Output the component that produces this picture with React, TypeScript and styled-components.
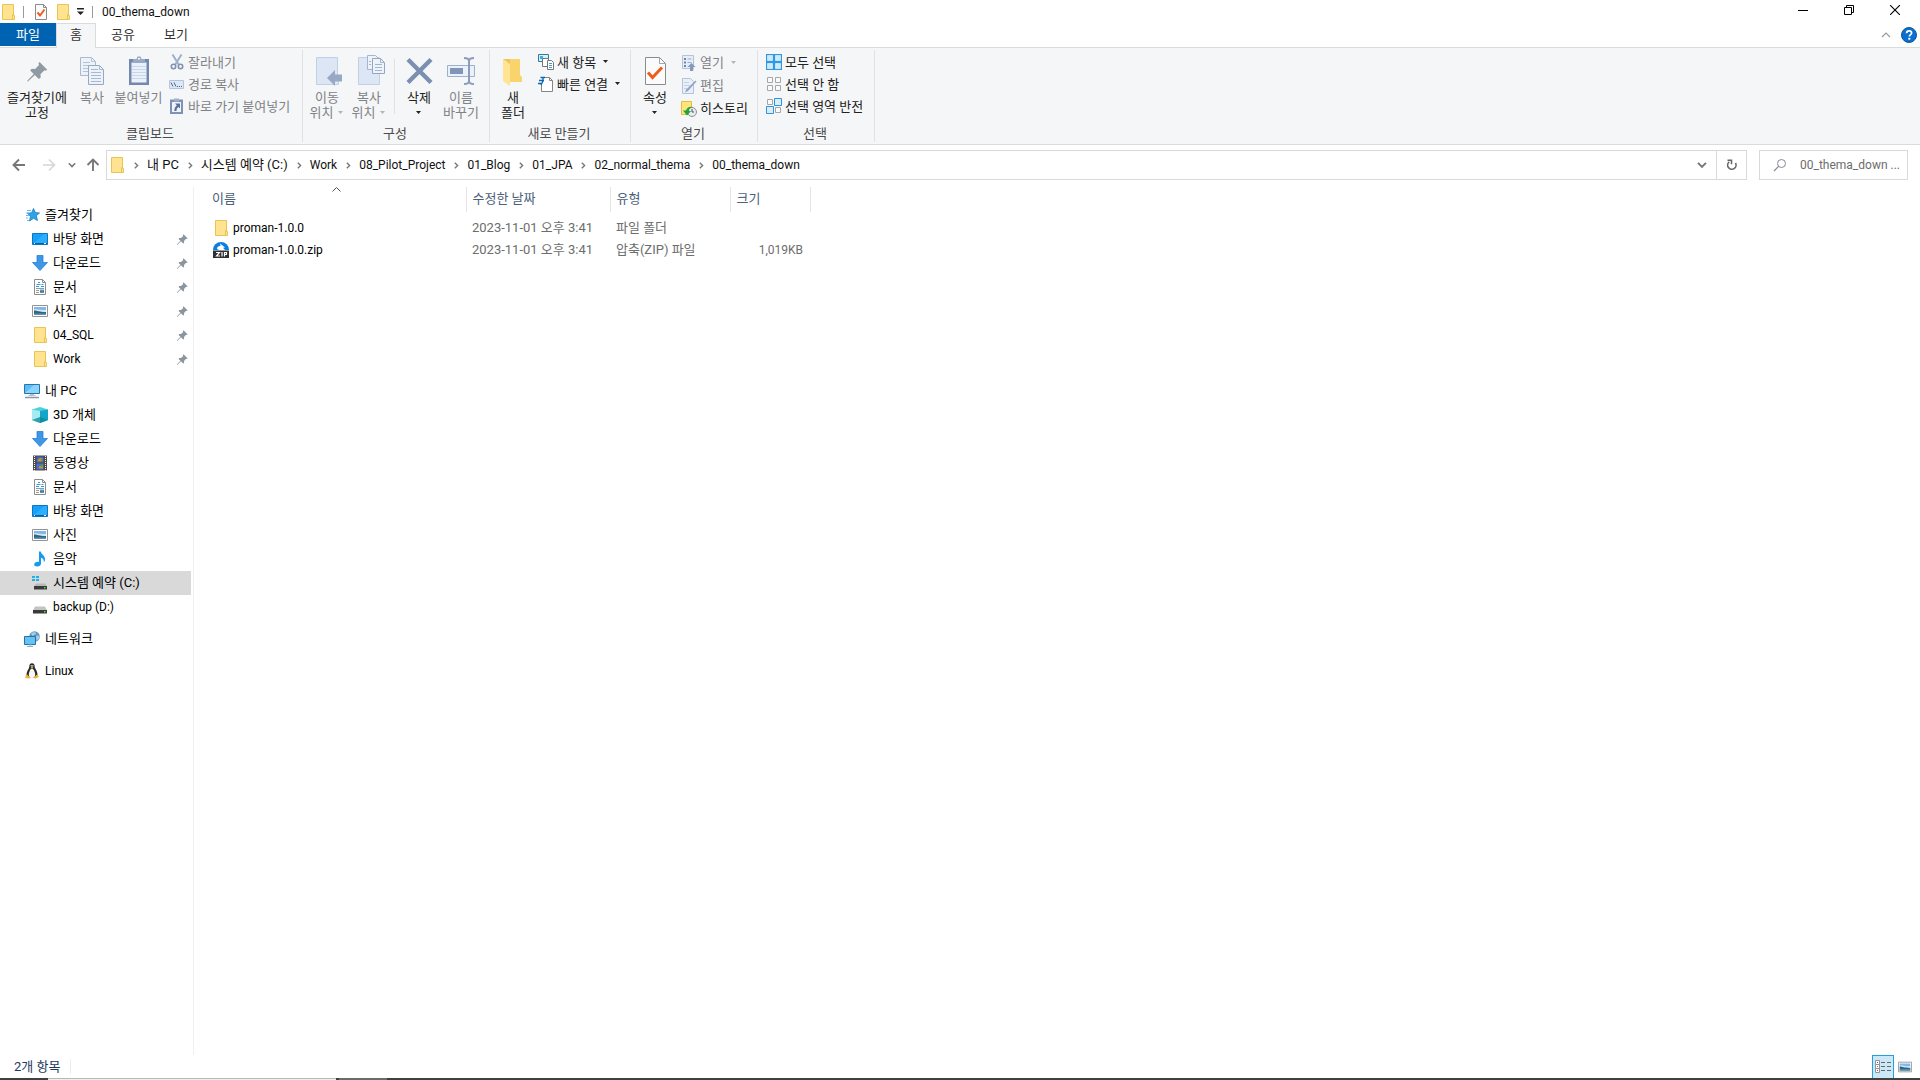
import React from "react";
import styled, { createGlobalStyle, css } from "styled-components";

const GlobalStyle = createGlobalStyle`
  *, *::before, *::after { box-sizing: border-box; }
  html, body { margin: 0; padding: 0; background: #fff; }
  body, button, input, table {
    font-family: Roboto, "Noto Sans CJK KR", sans-serif;
    font-size: 13px;
    line-height: 15px;
    color: #111;
  }
  button { margin: 0; padding: 0; border: 0; background: none; cursor: default; }
  svg { display: block; flex: none; }
  a { color: inherit; text-decoration: none; cursor: default; }
  ul, ol { margin: 0; padding: 0; list-style: none; }
`;

const LINE = "#dadbdc";

/* ---------- text ---------- */

const TextSpan = styled.span<{ $latin: boolean }>`
  display: block;
  white-space: nowrap;
  font-size: ${(p) => (p.$latin ? "12px" : "13px")};
  padding-bottom: ${(p) => (p.$latin ? "0" : "2px")};
`;

const Text = ({ children }: { children: string }) => (
  <TextSpan $latin={!/[\uac00-\ud7a3]/.test(children)}>{children}</TextSpan>
);

/* ---------- icons ---------- */

type SvgProps = { w?: number; h?: number; box?: string; children: React.ReactNode };
const Svg = ({ w = 16, h = 16, box, children }: SvgProps) => (
  <svg width={w} height={h} viewBox={box ?? `0 0 ${w} ${h}`} fill="none" aria-hidden="true">
    {children}
  </svg>
);

const FolderIcon = () => (
  <Svg>
    <path d="M2.500.5h11v11h1v4h-12z" fill="#ffe391" stroke="#e8c454" />
    <path d="M12.500 15.500v-5h1" stroke="#e8c454" />
  </Svg>
);

const CheckedDocIcon = () => (
  <Svg>
    <path d="M2.500.5h8l3 3v12h-11z" fill="#fbfbfb" stroke="#8b8b8b" />
    <path d="M10.500.5v3h3" stroke="#8b8b8b" />
    <path d="M4.500 8.500l2.500 3 4.500-6" stroke="#ee5b22" strokeWidth="2" />
  </Svg>
);

const Caret = ({ color = "#222" }: { color?: string }) => (
  <Svg w={6} h={4}>
    <path d="M0 0h5L2.500 3z" fill={color} />
  </Svg>
);

const OverflowIcon = () => (
  <Svg w={8} h={8}>
    <path d="M0 0h7v1.500H0zM0 3.500h7L3.500 7z" fill="#222" />
  </Svg>
);

const MinimizeIcon = () => (
  <Svg w={10} h={10}>
    <path d="M0 5.500h10" stroke="#000" />
  </Svg>
);
const RestoreIcon = () => (
  <Svg w={10} h={10}>
    <path d="M.5 2.500h7v7h-7zM2.500 2.500v-2h7v7h-2" stroke="#000" />
  </Svg>
);
const CloseIcon = () => (
  <Svg w={10} h={10}>
    <path d="M0 0l10 10M10 0L0 10" stroke="#000" strokeWidth="1.100" />
  </Svg>
);
const HelpIcon = () => (
  <Svg>
    <circle cx="8" cy="8" r="7.500" fill="#0a6fce" stroke="#0c57a0" />
    <path d="M5.600 6.200c0-1.500 1-2.400 2.500-2.400s2.500.8 2.500 2.100c0 1.700-2.200 1.700-2.200 3.600" stroke="#fff" strokeWidth="1.700" />
    <path d="M7.300 10.800h2v1.900h-2z" fill="#fff" />
  </Svg>
);
const CollapseIcon = () => (
  <Svg w={10} h={6}>
    <path d="M1 5l4-4 4 4" stroke="#9a9a9a" strokeWidth="1.200" />
  </Svg>
);

const pinPath = "M9.500.5l6 6-1.200.9-1-.4-3.100 3.100.2 2.500-1.500 1.200L5.800 10.700.6 15.600l-.8.200.3-.9 4.900-5.100L2.200 7.100l1.100-1.400 2.700.2 3.100-3.100-.5-1.200z";
const PinLargeIcon = () => (
  <Svg w={32} h={32} box="-5 -5 25 25">
    <path d={pinPath} fill="#8f9aa3" />
  </Svg>
);
const PinIcon = () => (
  <Svg w={11} h={11} box="0 0 16 16">
    <path d={pinPath} fill="#8a959e" />
  </Svg>
);

const CopyLargeIcon = () => (
  <Svg w={32} h={32}>
    <path d="M4.500 2.500h11l4 4v14h-15z" fill="#edf2f9" stroke="#a9b9d2" />
    <path d="M15.500 2.500v4h4M7 7.500h7M7 10.500h10M7 13.500h10M7 16.500h10" stroke="#b4c3da" />
    <path d="M12.500 10.500h11l4 4v15h-15z" fill="#edf2f9" stroke="#96a8c6" />
    <path d="M23.500 10.500v4h4M15 14.500h7M15 17.500h10M15 20.500h10M15 23.500h10M15 26.500h10" stroke="#a7b8d3" />
  </Svg>
);
const PasteLargeIcon = () => (
  <Svg w={32} h={32}>
    <path d="M6 4h20v26H6z" fill="#7488ad" />
    <path d="M8.500 7.500h15v20h-15z" fill="#eaf1fa" />
    <path d="M9 11.500h14M9 14.500h14M9 17.500h14M9 20.500h14M9 23.500h14" stroke="#c9d7ea" />
    <path d="M10 4h3.500l1-2.500h3l1 2.500H22v4H10z" fill="#9aaac6" />
    <path d="M15 3h2v1.500h-2z" fill="#f5f6f7" />
  </Svg>
);
const CutIcon = () => (
  <Svg>
    <path d="M3.500.5l6.200 10M12.500.5l-6.200 10" stroke="#9fb0c9" strokeWidth="2" />
    <circle cx="4.500" cy="12.500" r="2.200" stroke="#7f92b2" strokeWidth="1.600" />
    <circle cx="11.500" cy="12.500" r="2.200" stroke="#7f92b2" strokeWidth="1.600" />
  </Svg>
);
const PathIcon = () => (
  <Svg>
    <path d="M.5 4.500h14v8H.5z" fill="#dce8f6" stroke="#b3c4dc" />
    <path d="M2 6.500l2 4M5 6.500l2 4M8 10.500h1M10 10.500h1M12 10.500h1" stroke="#50658c" />
  </Svg>
);
const PasteShortcutIcon = () => (
  <Svg>
    <path d="M1 1.500h13V16H1z" fill="#7f92b3" />
    <path d="M3 4h9v10H3z" fill="#eef4fb" />
    <path d="M5 .5h5v3H5z" fill="#a2b1ca" />
    <path d="M6 5.500h5v5L9.400 8.900C8 10 7.500 11 7.500 13H5.300c0-2.600.9-4.200 2.500-5.700z" fill="#5b719b" />
  </Svg>
);

const MoveToIcon = () => (
  <Svg w={32} h={32}>
    <path d="M5.500 2.500h21v20h1v7h-22z" fill="#dce6f4" stroke="#c2d0e4" />
    <path d="M31 19.500h-7v-4.500l-8 8 8 8v-4.500h7z" fill="#98a9c5" />
  </Svg>
);
const CopyToIcon = () => (
  <Svg w={32} h={32}>
    <path d="M5.500 2.500h21v27h-21z" fill="#dce6f4" stroke="#c2d0e4" />
    <path d="M14.500.5h8l3 3v11h-11z" fill="#eef3fa" stroke="#a5b5cf" />
    <path d="M19.500 3.500h8l4 4v11h-12z" fill="#eef3fa" stroke="#94a6c4" />
    <path d="M27.500 3.500v4h4M22 9.500h7M22 12.500h7M22 15.500h7M16 6.500h2M16 9.500h2" stroke="#a3b4cf" />
  </Svg>
);
const DeleteIcon = () => (
  <Svg w={32} h={32}>
    <path d="M5 4.500l23 23M28 4.500l-23 23" stroke="#7b8fb1" strokeWidth="4.400" />
  </Svg>
);
const RenameIcon = () => (
  <Svg w={32} h={32}>
    <path d="M2.500 10.500h27v11h-27z" fill="#eaf1fa" stroke="#9eb0cc" />
    <path d="M5 13h13v6H5z" fill="#8395b7" />
    <path d="M19 3c3 0 5 .5 5 3v20c0 2.500-2 3-5 3M29 3c-3 0-5 .5-5 3v20c0 2.500 2 3 5 3" stroke="#8b9dbb" strokeWidth="2" />
  </Svg>
);
const NewFolderIcon = () => (
  <Svg w={32} h={32}>
    <path d="M11 4h12v16l2 2v5H11z" fill="#f9d36c" />
    <path d="M6 4l7 5v22l-7-5z" fill="#ffe494" />
    <path d="M6 4h7v5z" fill="#eec45c" />
  </Svg>
);
const NewItemIcon = () => (
  <Svg>
    <path d="M.5.500h10v7H.5z" fill="#d5effb" stroke="#35789b" />
    <path d="M2 2h3v3H2z" fill="#3ab0df" />
    <path d="M4.500 4.500h6v8h-6z" fill="#fff" stroke="#777" />
    <path d="M9.500 6.500h4l2 2v7h-6z" fill="#fff" stroke="#777" />
    <path d="M11 9.500h3M11 11.500h3M11 13.500h3" stroke="#4598c9" />
  </Svg>
);
const EasyAccessIcon = () => (
  <Svg>
    <path d="M4.500 1.500h7l3 3v11h-11V7" fill="#fff" stroke="#858585" />
    <path d="M11.500 1.500v3h3" stroke="#858585" />
    <path d="M2.500 1.500H7M1 4.500h5M0 7.500h3.500M5 1v4l-2 4" stroke="#0d68b0" strokeWidth="1.300" />
  </Svg>
);
const PropertiesIcon = () => (
  <Svg w={32} h={32}>
    <path d="M6.500 2.500h14l6 6v21h-20z" fill="#fbfbfb" stroke="#8b8b8b" />
    <path d="M20.500 2.500v6h6" stroke="#a5a5a5" />
    <path d="M9 17.500l4.500 5L23 12.500" stroke="#f05a1c" strokeWidth="3" />
  </Svg>
);
const OpenIcon = () => (
  <Svg>
    <path d="M1.500.5h11v13h-11z" fill="#e6eefa" stroke="#b4c3dc" />
    <path d="M3 3h2v2H3zM3 6.500h2v2H3zM3 10h2v2H3z" fill="#7085ad" />
    <path d="M6.500 4h4M6.500 7.500h4" stroke="#9badca" />
    <path d="M10.500 8l4 4h-2.300v4H9v-4H6.500z" fill="#8799ba" />
  </Svg>
);
const EditIcon = () => (
  <Svg>
    <path d="M1.500.5h8l3 3v12h-11z" fill="#e9f0fa" stroke="#b4c3dc" />
    <path d="M3 4.500h5M3 7.500h6M3 10.500h3" stroke="#c5d2e6" />
    <path d="M14.500 2.500l1 1-8.500 9.500-3 1.500 1.200-3z" fill="#93a5c4" />
  </Svg>
);
const HistoryIcon = () => (
  <Svg>
    <path d="M.5.500h10v13H.5z" fill="#ffe37b" stroke="#e6bd3b" />
    <circle cx="11" cy="11" r="4.500" fill="#e7ebee" stroke="#8b9196" />
    <path d="M11 8v3h2" stroke="#555" />
    <path d="M2 9.500h3C6 6.500 8.500 5 11.500 6c-2.500.5-3.500 2-3.500 4h2l-4 4.500z" fill="#20a33a" />
  </Svg>
);
const blueCell = { fill: "#d8eefc", stroke: "#2f92dd" };
const greyCell = { fill: "#fafafa", stroke: "#a6a6a6" };
const SelectAllIcon = () => (
  <Svg>
    <path d="M0 0h16v16H0z" fill="#2f97e4" />
    <path d="M1.500 1.500h5v5h-5zM9.500 1.500h5v5h-5zM1.500 9.500h5v5h-5zM9.500 9.500h5v5h-5z" fill="#cdeafd" stroke="#bfe4fb" />
  </Svg>
);
const SelectNoneIcon = () => (
  <Svg>
    <path d="M1.500 1.500h5v5h-5zM9.500 1.500h5v5h-5zM1.500 9.500h5v5h-5zM9.500 9.500h5v5h-5z" {...greyCell} />
  </Svg>
);
const InvertIcon = () => (
  <Svg>
    <path d="M1.500 1.500h5v5h-5zM9.500 9.500h5v5h-5z" {...greyCell} />
    <path d="M8.500.5h7v7h-7zM.5 8.500h7v7h-7z" {...blueCell} />
  </Svg>
);

const ArrowIcon = ({ color = "#777", up = false }: { color?: string; up?: boolean }) => (
  <Svg w={14} h={14}>
    <path
      d={up ? "M7 13V1.500M1.500 7L7 1.500 12.500 7" : "M13 7H1.500M7 1.500L1.500 7 7 12.500"}
      stroke={color}
      strokeWidth="1.900"
    />
  </Svg>
);
const ForwardIcon = () => (
  <Svg w={14} h={14}>
    <path d="M1 7h11.500M7 1.500L12.500 7 7 12.500" stroke="#d6d6d6" strokeWidth="1.600" />
  </Svg>
);
const ChevronDown = ({ w = 8 }: { w?: number }) => (
  <Svg w={w} h={w} box="0 0 8 8">
    <path d="M.8 2.300L4 5.500l3.200-3.200" stroke="#777" strokeWidth="1.600" />
  </Svg>
);
const ChevronRight = () => (
  <Svg w={5} h={7}>
    <path d="M.8.8l2.800 2.700L.8 6.200" stroke="#777" strokeWidth="1.400" />
  </Svg>
);
const RefreshIcon = () => (
  <Svg w={12} h={12}>
    <path d="M3.200 2.800A4.200 4.200 0 1 0 9.500 4" stroke="#666" strokeWidth="1.600" />
    <path d="M1.500 1.300h4v4" stroke="#666" strokeWidth="1.500" />
  </Svg>
);
const SearchIcon = () => (
  <Svg w={14} h={14}>
    <circle cx="8.500" cy="5.500" r="4" stroke="#8b8399" />
    <path d="M5.600 8.400L1 13" stroke="#8b8399" strokeWidth="1.200" />
  </Svg>
);

const StarIcon = () => (
  <Svg>
    <path d="M9.500 1.500l1.900 4.100 4.100.3-3.200 2.900 1.200 4.700-4-2.200-4 2.700 1-4.700-3.100-3 4.300-.6z" fill="#2fa3e6" stroke="#1d7fc4" strokeWidth=".8" />
    <path d="M3 3.500h4M2 6h3M2 8.500h3M2 11h2M3 13.500h2" stroke="#63bdf0" />
  </Svg>
);
const DesktopIcon = () => (
  <Svg>
    <path d="M.5 2.500h15v11H.5z" fill="#14a0fb" stroke="#0c76c0" />
    <path d="M1 13L12 3h3v10z" fill="#2caefc" />
    <path d="M1 12.500h14" stroke="#0b5f9c" />
    <path d="M2 12.500h1M12 12.500h2" stroke="#fff" />
  </Svg>
);
const DownloadIcon = () => (
  <Svg>
    <path d="M5 .5h6v7h4.500L8 15.500.5 7.500H5z" fill="#3c97e8" stroke="#2f7fca" strokeWidth=".8" />
  </Svg>
);
const DocumentIcon = () => (
  <Svg>
    <path d="M2.500.5h8l3 3v12h-11z" fill="#fff" stroke="#8c8c8c" />
    <path d="M10.500.5v3h3" stroke="#8c8c8c" />
    <path d="M6 3.500h2M4.500 5.500h4M9.500 5.500h2M4 7.500h3M9 7.500h3" stroke="#2e9be0" />
    <path d="M4 9.500h8M4 11.500h3M4 13.500h3" stroke="#9a9a9a" />
    <path d="M8 10.500h4v3H8z" fill="#4d9bd0" />
    <path d="M8 12.500h4v1H8z" fill="#315f58" />
  </Svg>
);
const PictureIcon = ({ small = false }: { small?: boolean }) => (
  <Svg w={small ? 14 : 16} h={small ? 14 : 16} box="0 0 16 16">
    <path d="M.5 2.500h15v11H.5z" fill="#fff" stroke="#939393" />
    <path d="M2 4h12v8H2z" fill="#7fb8ee" />
    <path d="M2 6.500c3-1 6 1 12 .5v2H2z" fill="#d3e9f7" />
    <path d="M2 7.500c3 0 5 1.500 12 1.500v3H2z" fill="#2c667a" />
    <path d="M2 10.500h12V12H2z" fill="#5d93b5" />
  </Svg>
);
const PcIcon = () => (
  <Svg>
    <path d="M.5 1.500h15v9H.5z" fill="#58bdfa" stroke="#2a75a8" />
    <path d="M1 10L10 2h5v8z" fill="#8bd4fd" />
    <path d="M6 11.500h4M4.500 12.500h7" stroke="#b7c3cb" />
    <path d="M1 14.500h14" stroke="#8796ad" strokeWidth="1.500" />
  </Svg>
);
const CubeIcon = () => (
  <Svg>
    <path d="M0 2.500L8 0l8 2.500v10.500L8 16l-8-3z" fill="#4bd0dc" />
    <path d="M0 2.500L8 4v12l-8-3z" fill="#a4ecef" />
    <path d="M8 4l8-1.500V13l-8 3z" fill="#12a7c8" />
    <path d="M0 13l8-3 8 3-8 3z" fill="#0d8795" opacity=".75" />
  </Svg>
);
const VideoIcon = () => (
  <Svg>
    <path d="M1 .5h14v15H1z" fill="#4b4b4b" />
    <path d="M4.500 1.500h7v6h-7z" fill="#3c62c7" />
    <path d="M4.500 8.500h7v6h-7z" fill="#4a6fd2" />
    <path d="M7.500 3h3v3.500h-5V5zM7 11h4v2.500H7z" fill="#c88f2f" />
    <path d="M9 4h2v2H9zM9 9.500h2v2H9z" fill="#47a044" />
    <path d="M2.500 1v15M13.500 1v15" stroke="#f4f4f4" strokeDasharray="1 1" />
  </Svg>
);
const MusicIcon = () => (
  <Svg>
    <path d="M7 .5h1.800c.4 3 4.200 3.800 4.200 7.500 0 1.600-.5 2.600-1.200 3.500.3-3-1-4.200-2.800-4.700v5.700c0 1.800-1.800 3-3.700 3S2 14.500 2.200 13.200C2.500 11.500 4.500 10.300 7 10.800z" fill="#139bf2" />
  </Svg>
);
const SystemDriveIcon = () => (
  <Svg>
    <path d="M0 1h3v2H0zM4 1h3v2H4zM0 4h3v2H0zM4 4h3v2H4z" fill="#1fb0ea" />
    <path d="M4 8.500h9.500l1.500 3H2z" fill="#b9b9b9" />
    <path d="M2 11h13v3.500H2z" fill="#3a3a3a" />
    <path d="M12 12h1.500v1.500H12z" fill="#3fe04a" />
  </Svg>
);
const DriveIcon = () => (
  <Svg>
    <path d="M3 7.500h10l2 4H1z" fill="#c4c4c4" />
    <path d="M1 11h14v3.500H1z" fill="#3a3a3a" />
    <path d="M12 12h1.500v1.500H12z" fill="#3fe04a" />
  </Svg>
);
const NetworkIcon = () => (
  <Svg>
    <circle cx="10.500" cy="5.500" r="5.300" fill="#5d9bc4" />
    <path d="M7 2.500c2-2 5-1.500 5 0s-3 1-3 3zM12 5c2-1 3-.5 3.500.5-.3 2-1.500 3.500-3 4.300z" fill="#a9cde0" />
    <path d="M.5 5.500h11v8H.5z" fill="#63c3f6" stroke="#27719f" />
    <path d="M5 14h2.500M3 15.500h6" stroke="#8fb0c5" />
  </Svg>
);
const LinuxIcon = () => (
  <Svg>
    <path d="M8 .3c2 0 2.800 1.400 2.700 3.400 0 1.600 2.800 4 2.800 7.700 0 1-.5 2.600-1.500 3H4c-1-.4-1.500-2-1.500-3C2.500 8 5.300 5.500 5.300 3.700 5.200 1.700 6 .3 8 .3z" fill="#2b2b2b" />
    <path d="M8 5.500c1.500 0 3.200 3.800 3.200 6.200S9.500 15 8 15s-3.200-.8-3.200-3.300S6.500 5.500 8 5.500z" fill="#f7f7f7" />
    <path d="M6.500 4L8 3.300 9.500 4 8 5.400zM3 11.500l3 2.700c.3 1-.4 1.500-1.300 1.400l-3.500-.7.500-2.500zM13 11.500l-2.700 2.500c-.2 1 .4 1.700 1.300 1.500l3.200-1.500-.8-1.700z" fill="#f0b62c" />
    <circle cx="7.200" cy="2.700" r=".6" fill="#fff" />
    <circle cx="8.900" cy="2.700" r=".6" fill="#fff" />
  </Svg>
);
const ZipIcon = () => (
  <Svg>
    <path d="M0 8a8 8 0 0 1 16 0z" fill="#0a7fe0" />
    <path d="M4 7c0-2 1.500-3.200 3.500-3L7 1.500l5 4-2 .3L12 8H6z" fill="#fff" />
    <path d="M0 8.500h16V16H0z" fill="#2f2f2f" />
    <path d="M3 10.500h3.500L3.500 14H7M9 10v4.500M11.500 14.500v-4h2v2h-2" stroke="#fff" strokeWidth="1.200" />
  </Svg>
);
const DetailsViewIcon = () => (
  <Svg w={18} h={14}>
    <path d="M1.500.5h4v4h-4zM1.500 4.500h4v4h-4zM1.500 8.500h4v4h-4z" fill="#fff" stroke="#939393" />
    <path d="M3 2.500h1" stroke="#555" />
    <path d="M3 6.500h1" stroke="#4a90c8" />
    <path d="M3 10.500h1" stroke="#d03030" />
    <path d="M7 2.500h4M13 2.500h4M7 6.500h4M13 6.500h4M7 10.500h4M13 10.500h4" stroke="#666" />
  </Svg>
);

/* ---------- frame ---------- */

const Window = styled.div`
  display: flex;
  flex-direction: column;
  min-height: 100vh;
  background: #fff;
`;

const TitleBar = styled.header`
  display: flex;
  align-items: center;
  justify-content: space-between;
  height: 23px;
  padding: 0 2px 4px 0;
`;

const QuickAccess = styled.div`
  display: flex;
  align-items: center;
  gap: 6px;
  padding-top: 4px;
`;

const QuickDivider = styled.span`
  width: 1px;
  height: 12px;
  margin: 0 3px 0 1px;
  background: #9a9a9a;
`;

const IconButton = styled.button<{ $w?: number }>`
  display: flex;
  align-items: center;
  justify-content: center;
  width: ${(p) => p.$w ?? 16}px;
`;

const WindowTitle = styled.h1`
  display: flex;
  margin: 0;
  padding-top: 2px;
  font-weight: 400;
`;

const Row = styled.div`
  display: flex;
  align-items: center;
`;

const Tabs = styled.nav`
  display: flex;
  align-items: flex-start;
  height: 24px;
`;

const Tab = styled.button<{ $kind?: "file" | "active"; $w: number }>`
  width: ${(p) => p.$w}px;
  height: 23px;
  padding-bottom: 1px;
  color: #333;
  ${(p) => p.$kind === "file" && css`background: #0063b1; color: #fff;`}
  ${(p) =>
    p.$kind === "active" &&
    css`
      position: relative;
      height: 25px;
      padding-bottom: 3px;
      background: #f5f6f7;
      border: 1px solid ${LINE};
      border-bottom: 0;
    `}
`;

const TabsEnd = styled.div`
  display: flex;
  align-items: center;
  gap: 10px;
  height: 24px;
  margin-left: auto;
  padding-right: 3px;
`;

const Ribbon = styled.section`
  display: flex;
  height: 98px;
  padding: 2px 0;
  background: #f5f6f7;
  border: solid ${LINE};
  border-width: 1px 0;
`;

const Group = styled.div<{ $w: number }>`
  display: flex;
  flex-direction: column;
  justify-content: space-between;
  width: ${(p) => p.$w}px;
  border-right: 1px solid #e0e1e3;
`;

const GroupBody = styled.div`
  display: flex;
  align-items: flex-start;
  padding-left: 3px;
`;

const GroupLabel = styled.div`
  padding: 0 2px 1px 0;
  color: #4a4a4a;
  text-align: center;
`;

const BigButton = styled.button<{ $w: number; $off?: boolean }>`
  display: flex;
  flex-direction: column;
  align-items: center;
  gap: 3px;
  width: ${(p) => p.$w}px;
  padding-top: 5px;
  color: ${(p) => (p.$off ? "#808286" : "#222")};
  white-space: nowrap;
`;

const BigLabel = styled.span`
  display: flex;
  flex-direction: column;
  align-items: center;
`;

const CaretLine = styled.span`
  display: flex;
  align-items: center;
  gap: 5px;
  height: 15px;
`;

const InnerDivider = styled.span`
  width: 1px;
  height: 55px;
  margin: 9px 3px 0 4px;
  background: #e0e1e3;
`;

const SmallList = styled.div<{ $row: number }>`
  display: grid;
  grid-auto-rows: ${(p) => p.$row}px;
  padding: 1px 0 0 5px;
`;

const SmallButton = styled.button<{ $off?: boolean }>`
  display: flex;
  align-items: center;
  gap: 3px;
  color: ${(p) => (p.$off ? "#808286" : "#222")};
  white-space: nowrap;
  & > span + svg { margin-left: 4px; }
`;

type BigProps = { icon: React.ReactNode; lines: string[]; w: number; off?: boolean; caret?: boolean };
const Big = ({ icon, lines, w, off, caret }: BigProps) => (
  <BigButton $w={w} $off={off} disabled={off}>
    {icon}
    <BigLabel>
      {lines.map((line, i) =>
        caret && i === lines.length - 1 && i > 0 ? (
          <CaretLine key={i}>
            {line}
            <Caret color={off ? "#b5b5b5" : "#222"} />
          </CaretLine>
        ) : (
          <span key={i}>{line}</span>
        ),
      )}
      {caret && lines.length === 1 && (
        <CaretLine>
          <Caret />
        </CaretLine>
      )}
    </BigLabel>
  </BigButton>
);

type SmallProps = { icon: React.ReactNode; label: string; off?: boolean; caret?: boolean };
const Small = ({ icon, label, off, caret }: SmallProps) => (
  <SmallButton $off={off} disabled={off}>
    {icon}
    <span>{label}</span>
    {caret && <Caret color={off ? "#b5b5b5" : "#222"} />}
  </SmallButton>
);

/* ---------- address row ---------- */

const AddressRow = styled.div`
  display: flex;
  align-items: center;
  height: 40px;
  padding: 0 12px 0 12px;
`;

const NavButtons = styled.div`
  display: flex;
  align-items: center;
  width: 94px;
  & > button:nth-child(2) { margin-left: 16px; }
  & > button:nth-child(3) { margin-left: 12px; }
  & > button:nth-child(4) { margin-left: 10px; }
`;

const AddressBox = styled.div`
  display: flex;
  flex: 1;
  align-items: center;
  height: 30px;
  padding-left: 2px;
  border: 1px solid #d9d9d9;
`;

const Crumbs = styled.ol`
  display: flex;
  align-items: center;
  flex: 1;
`;

const Crumb = styled.li`
  display: flex;
  align-items: center;
  & > svg { margin: 0 8px 0 9px; }
`;

const RefreshButton = styled(IconButton)`
  height: 28px;
  border-left: 1px solid #d9d9d9;
`;

const SearchBox = styled.label`
  display: flex;
  align-items: center;
  gap: 13px;
  width: 149px;
  height: 30px;
  margin-left: 12px;
  padding: 0 6px 0 13px;
  border: 1px solid #d9d9d9;
`;

const SearchInput = styled.input`
  flex: 1;
  min-width: 0;
  padding: 0;
  border: 0;
  outline: 0;
  background: none;
  font-size: 12px;
  &::placeholder { color: #6d6d6d; opacity: 1; }
`;

/* ---------- body ---------- */

const Body = styled.main`
  display: flex;
  flex: 1;
  padding-top: 2px;
`;

const Sidebar = styled.nav`
  display: flex;
  flex-direction: column;
  gap: 8px;
  width: 194px;
  padding: 16px 2px 0 0;
  border-right: 1px solid #f0f0f0;
`;

const TreeItem = styled.a<{ $root?: boolean; $selected?: boolean }>`
  display: flex;
  align-items: center;
  gap: 5px;
  height: 24px;
  padding: 0 3px 0 ${(p) => (p.$root ? 24 : 32)}px;
  color: #000;
  background: ${(p) => (p.$selected ? "#d9d9d9" : "none")};
  & > span + svg { margin-left: auto; }
`;

const FileTable = styled.table`
  width: 616px;
  table-layout: fixed;
  border-collapse: collapse;
`;

const HeadCell = styled.th`
  position: relative;
  height: 25px;
  padding: 0 0 2px 6px;
  border-right: 1px solid #e5e5e5;
  color: #4c607a;
  font-weight: 400;
  text-align: left;
  &:first-child { padding-left: 18px; }
`;

const SortMark = styled.span`
  position: absolute;
  top: 0;
  left: 138px;
`;

const Cell = styled.td<{ $right?: boolean }>`
  height: 22px;
  padding: 0 7px 0 6px;
  color: #6d6d6d;
  text-align: ${(p) => (p.$right ? "right" : "left")};
  white-space: nowrap;
`;

const NameCell = styled(Cell)`
  padding-left: 19px;
  & > a {
    display: flex;
    align-items: center;
    gap: 4px;
    color: #000;
  }
`;

const FileRows = styled.tbody`
  &::before { content: ""; display: block; height: 5px; }
`;

/* ---------- status bar ---------- */

const StatusBar = styled.footer`
  display: flex;
  align-items: center;
  height: 23px;
  padding: 0 7px 0 14px;
  color: #1e395b;
`;

const StatusCount = styled.span`
  padding-right: 10px;
  border-right: 1px solid #ececec;
`;

const ViewModes = styled.div`
  display: flex;
  align-items: center;
  gap: 3px;
  height: 23px;
  margin-left: auto;
`;

const ViewButton = styled.button<{ $on?: boolean }>`
  display: flex;
  align-items: center;
  justify-content: center;
  width: ${(p) => (p.$on ? 22 : 16)}px;
  height: 23px;
  ${(p) => p.$on && css`background: #cce8f7; border: 1px solid #26a0da; border-bottom: 0;`}
`;

const Taskbar = styled.div`
  display: flex;
  height: 2px;
  background: #404040;
`;
const TaskSlice = styled.span<{ $before: number; $w: number; $active?: boolean }>`
  width: ${(p) => p.$w}px;
  margin-left: ${(p) => p.$before}px;
  background: ${(p) => (p.$active ? "#f0f0f0" : "#6b6b6b")};
  ${(p) => p.$active && css`border-top: 1px solid #b8b8b8;`}
`;

/* ---------- data ---------- */

const crumbs = ["내 PC", "시스템 예약 (C:)", "Work", "08_Pilot_Project", "01_Blog", "01_JPA", "02_normal_thema", "00_thema_down"];

type Node = { icon: React.ReactNode; label: string; root?: boolean; pinned?: boolean; selected?: boolean };
const tree: Node[][] = [
  [
    { icon: <StarIcon />, label: "즐겨찾기", root: true },
    { icon: <DesktopIcon />, label: "바탕 화면", pinned: true },
    { icon: <DownloadIcon />, label: "다운로드", pinned: true },
    { icon: <DocumentIcon />, label: "문서", pinned: true },
    { icon: <PictureIcon />, label: "사진", pinned: true },
    { icon: <FolderIcon />, label: "04_SQL", pinned: true },
    { icon: <FolderIcon />, label: "Work", pinned: true },
  ],
  [
    { icon: <PcIcon />, label: "내 PC", root: true },
    { icon: <CubeIcon />, label: "3D 개체" },
    { icon: <DownloadIcon />, label: "다운로드" },
    { icon: <VideoIcon />, label: "동영상" },
    { icon: <DocumentIcon />, label: "문서" },
    { icon: <DesktopIcon />, label: "바탕 화면" },
    { icon: <PictureIcon />, label: "사진" },
    { icon: <MusicIcon />, label: "음악" },
    { icon: <SystemDriveIcon />, label: "시스템 예약 (C:)", selected: true },
    { icon: <DriveIcon />, label: "backup (D:)" },
  ],
  [{ icon: <NetworkIcon />, label: "네트워크", root: true }],
  [{ icon: <LinuxIcon />, label: "Linux", root: true }],
];

const files = [
  { icon: <FolderIcon />, name: "proman-1.0.0", date: "2023-11-01 오후 3:41", type: "파일 폴더", size: "" },
  { icon: <ZipIcon />, name: "proman-1.0.0.zip", date: "2023-11-01 오후 3:41", type: "압축(ZIP) 파일", size: "1,019KB" },
];

export default function App() {
  return (
    <Window>
      <GlobalStyle />
      <TitleBar>
        <QuickAccess>
          <FolderIcon />
          <QuickDivider />
          <IconButton aria-label="속성"><CheckedDocIcon /></IconButton>
          <IconButton aria-label="새 폴더"><FolderIcon /></IconButton>
          <IconButton $w={8} aria-label="빠른 실행 도구 모음 사용자 지정"><OverflowIcon /></IconButton>
          <QuickDivider />
          <WindowTitle><Text>00_thema_down</Text></WindowTitle>
        </QuickAccess>
        <Row>
          <IconButton $w={46} aria-label="최소화"><MinimizeIcon /></IconButton>
          <IconButton $w={46} aria-label="이전 크기로 복원"><RestoreIcon /></IconButton>
          <IconButton $w={46} aria-label="닫기"><CloseIcon /></IconButton>
        </Row>
      </TitleBar>

      <Tabs>
        <Tab $kind="file" $w={56}>파일</Tab>
        <Tab $kind="active" $w={40}>홈</Tab>
        <Tab $w={54}>공유</Tab>
        <Tab $w={52}>보기</Tab>
        <TabsEnd>
          <IconButton $w={10} aria-label="리본 최소화"><CollapseIcon /></IconButton>
          <IconButton aria-label="도움말"><HelpIcon /></IconButton>
        </TabsEnd>
      </Tabs>

      <Ribbon>
        <Group $w={303}>
          <GroupBody>
            <Big w={68} icon={<PinLargeIcon />} lines={["즐겨찾기에", "고정"]} />
            <Big w={42} off icon={<CopyLargeIcon />} lines={["복사"]} />
            <Big w={51} off icon={<PasteLargeIcon />} lines={["붙여넣기"]} />
            <SmallList $row={22}>
              <Small off icon={<CutIcon />} label="잘라내기" />
              <Small off icon={<PathIcon />} label="경로 복사" />
              <Small off icon={<PasteShortcutIcon />} label="바로 가기 붙여넣기" />
            </SmallList>
          </GroupBody>
          <GroupLabel>클립보드</GroupLabel>
        </Group>
        <Group $w={187}>
          <GroupBody>
            <Big w={42} off caret icon={<MoveToIcon />} lines={["이동", "위치"]} />
            <Big w={42} off caret icon={<CopyToIcon />} lines={["복사", "위치"]} />
            <InnerDivider />
            <Big w={42} caret icon={<DeleteIcon />} lines={["삭제"]} />
            <Big w={42} off icon={<RenameIcon />} lines={["이름", "바꾸기"]} />
          </GroupBody>
          <GroupLabel>구성</GroupLabel>
        </Group>
        <Group $w={141}>
          <GroupBody>
            <Big w={40} icon={<NewFolderIcon />} lines={["새", "폴더"]} />
            <SmallList $row={22}>
              <Small caret icon={<NewItemIcon />} label="새 항목" />
              <Small caret icon={<EasyAccessIcon />} label="빠른 연결" />
            </SmallList>
          </GroupBody>
          <GroupLabel>새로 만들기</GroupLabel>
        </Group>
        <Group $w={127}>
          <GroupBody>
            <Big w={42} caret icon={<PropertiesIcon />} lines={["속성"]} />
            <SmallList $row={23}>
              <Small off caret icon={<OpenIcon />} label="열기" />
              <Small off icon={<EditIcon />} label="편집" />
              <Small icon={<HistoryIcon />} label="히스토리" />
            </SmallList>
          </GroupBody>
          <GroupLabel>열기</GroupLabel>
        </Group>
        <Group $w={117}>
          <GroupBody>
            <SmallList $row={22}>
              <Small icon={<SelectAllIcon />} label="모두 선택" />
              <Small icon={<SelectNoneIcon />} label="선택 안 함" />
              <Small icon={<InvertIcon />} label="선택 영역 반전" />
            </SmallList>
          </GroupBody>
          <GroupLabel>선택</GroupLabel>
        </Group>
      </Ribbon>

      <AddressRow>
        <NavButtons>
          <IconButton $w={14} aria-label="뒤로"><ArrowIcon /></IconButton>
          <IconButton $w={14} aria-label="앞으로" disabled><ForwardIcon /></IconButton>
          <IconButton $w={8} aria-label="최근 위치"><ChevronDown /></IconButton>
          <IconButton $w={14} aria-label="위로"><ArrowIcon up /></IconButton>
        </NavButtons>
        <AddressBox>
          <FolderIcon />
          <Crumbs>
            {crumbs.map((c) => (
              <Crumb key={c}>
                <ChevronRight />
                <a href="#"><Text>{c}</Text></a>
              </Crumb>
            ))}
          </Crumbs>
          <IconButton $w={28} aria-label="이전 위치"><ChevronDown w={10} /></IconButton>
          <RefreshButton $w={30} aria-label="새로 고침"><RefreshIcon /></RefreshButton>
        </AddressBox>
        <SearchBox>
          <SearchIcon />
          <SearchInput type="text" aria-label="검색" placeholder="00_thema_down ..." />
        </SearchBox>
      </AddressRow>

      <Body>
        <Sidebar>
          {tree.map((group, i) => (
            <ul key={i}>
              {group.map((n) => (
                <li key={n.label}>
                  <TreeItem href="#" $root={n.root} $selected={n.selected}>
                    {n.icon}
                    <Text>{n.label}</Text>
                    {n.pinned && <PinIcon />}
                  </TreeItem>
                </li>
              ))}
            </ul>
          ))}
        </Sidebar>
        <div>
          <FileTable>
            <colgroup>
              <col width={272} />
              <col width={144} />
              <col width={120} />
              <col width={80} />
            </colgroup>
            <thead>
              <tr>
                <HeadCell>
                  이름
                  <SortMark>
                    <Svg w={9} h={5}><path d="M.5 4.500l4-4 4 4" stroke="#555" /></Svg>
                  </SortMark>
                </HeadCell>
                <HeadCell>수정한 날짜</HeadCell>
                <HeadCell>유형</HeadCell>
                <HeadCell>크기</HeadCell>
              </tr>
            </thead>
            <FileRows>
              {files.map((f) => (
                <tr key={f.name}>
                  <NameCell><a href="#">{f.icon}<Text>{f.name}</Text></a></NameCell>
                  <Cell><Text>{f.date}</Text></Cell>
                  <Cell><Text>{f.type}</Text></Cell>
                  <Cell $right><Text>{f.size}</Text></Cell>
                </tr>
              ))}
            </FileRows>
          </FileTable>
        </div>
      </Body>

      <StatusBar>
        <StatusCount>2개 항목</StatusCount>
        <ViewModes>
          <ViewButton $on aria-label="자세히"><DetailsViewIcon /></ViewButton>
          <ViewButton aria-label="큰 아이콘"><PictureIcon small /></ViewButton>
        </ViewModes>
      </StatusBar>
      <Taskbar>
        <TaskSlice $before={48} $w={288} $active />
        <TaskSlice $before={3} $w={48} />
      </Taskbar>
    </Window>
  );
}
